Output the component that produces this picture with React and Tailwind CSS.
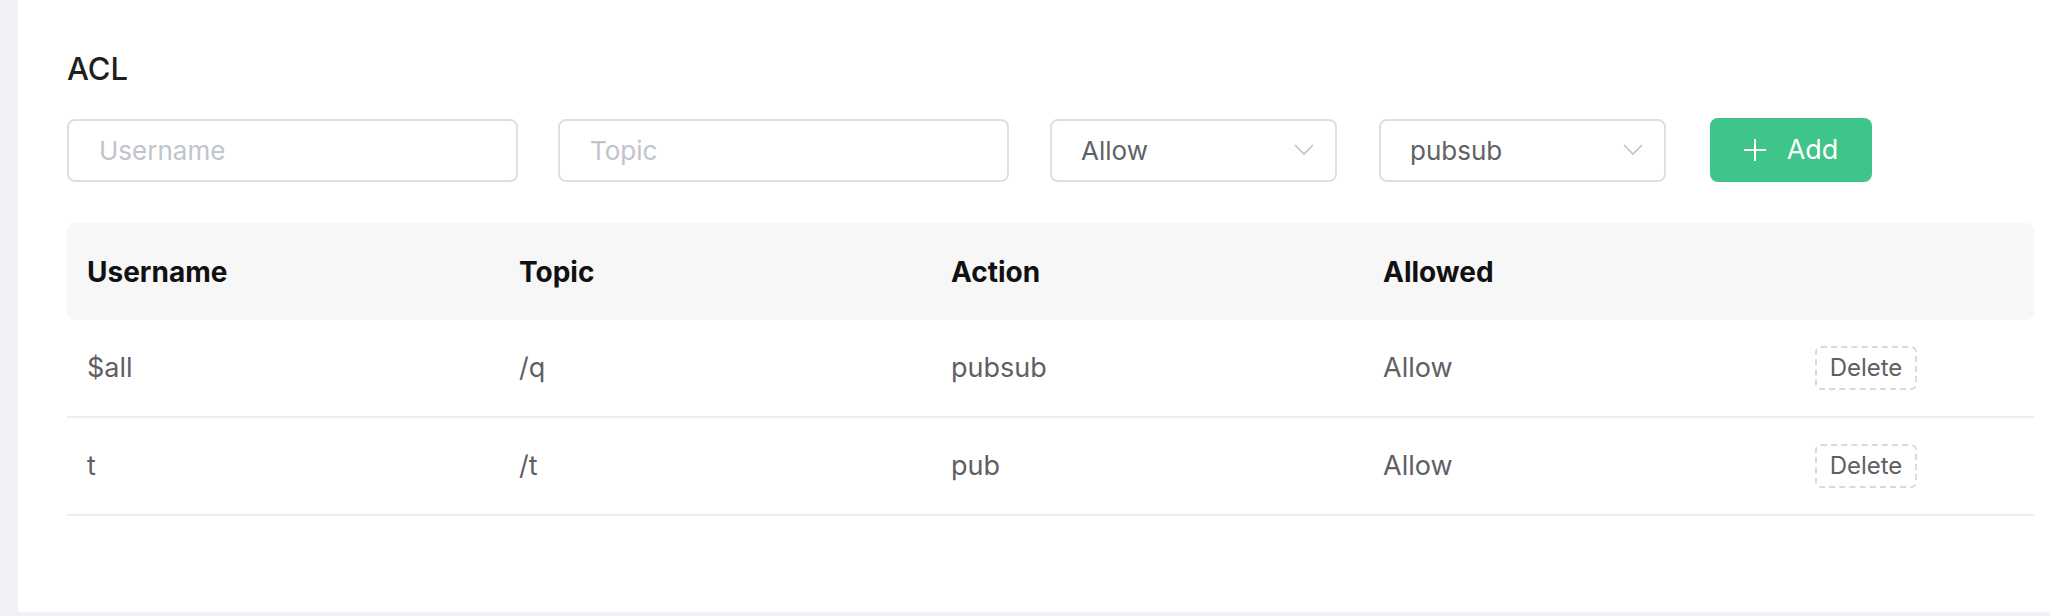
import React from 'react';

const rows = [
  { username: '$all', topic: '/q', action: 'pubsub', allowed: 'Allow' },
  { username: 't', topic: '/t', action: 'pub', allowed: 'Allow' },
];

const Chevron = () => (
  <svg width="20" height="12" viewBox="0 0 20 12" fill="none" className="shrink-0">
    <polyline points="1,1 10,10 19,1" stroke="#c0c4cc" strokeWidth="1.6" />
  </svg>
);

const TextInput = ({ placeholder }) => (
  <div className="w-[451px] h-[63px] border-2 border-[#dcdfe6] rounded-[8px] flex items-center px-[30px]">
    <span className="text-[26px] text-[#c0c4cc]">{placeholder}</span>
  </div>
);

const Select = ({ value, width }) => (
  <div
    className={`${width} h-[63px] border-2 border-[#dcdfe6] rounded-[8px] flex items-center justify-between pl-[29px] pr-[21px]`}
  >
    <span className="text-[26px] text-[#606266]">{value}</span>
    <Chevron />
  </div>
);

const cols = 'grid grid-cols-[432px_432px_432px_432px_1fr]';

const App = () => {
  return (
    <div
      className="w-full h-[616px] bg-[#f0f2f5] pl-[18px] pb-[4px]"
      style={{ fontFamily: 'Inter, "Noto Sans", sans-serif' }}
    >
      <div className="h-full bg-white rounded-bl-[4px] pl-[49px] pr-[16px] pt-[49px]">
        <h2 className="text-[31px] leading-[40px] font-medium text-[#1f1f1f]">ACL</h2>

        <div className="flex items-center mt-[29px]">
          <TextInput placeholder="Username" />
          <div className="ml-[40px]">
            <TextInput placeholder="Topic" />
          </div>
          <div className="ml-[41px]">
            <Select value="Allow" width="w-[287px]" />
          </div>
          <div className="ml-[42px]">
            <Select value="pubsub" width="w-[287px]" />
          </div>
          <button className="ml-[44px] w-[162px] h-[64px] rounded-[8px] bg-[#3fc48a] flex items-center justify-center gap-[21px] text-white">
            <svg width="22" height="22" viewBox="0 0 22 22" fill="none">
              <line x1="11" y1="0" x2="11" y2="22" stroke="white" strokeWidth="2" />
              <line x1="0" y1="11" x2="22" y2="11" stroke="white" strokeWidth="2" />
            </svg>
            <span className="text-[27px]">Add</span>
          </button>
        </div>

        <div className="mt-[41px]">
          <div className={`${cols} h-[97px] items-center bg-[#f7f7f7] rounded-[8px]`}>
            {['Username', 'Topic', 'Action', 'Allowed', ''].map((h, i) => (
              <div key={i} className="px-[20px] text-[28px] font-bold text-[#111111]">
                {h}
              </div>
            ))}
          </div>
          {rows.map((r, i) => (
            <div key={i} className={`${cols} h-[98px] items-center border-b-2 border-[#ebeef5]`}>
              <div className="px-[20px] text-[27px] text-[#5f6066]">{r.username}</div>
              <div className="px-[20px] text-[27px] text-[#5f6066]">{r.topic}</div>
              <div className="px-[20px] text-[27px] text-[#5f6066]">{r.action}</div>
              <div className="px-[20px] text-[27px] text-[#5f6066]">{r.allowed}</div>
              <div className="px-[20px]">
                <button className="w-[102px] h-[44px] border-2 border-dashed border-[#d9d9d9] rounded-[6px] text-[24px] text-[#5f6066] flex items-center justify-center">
                  Delete
                </button>
              </div>
            </div>
          ))}
        </div>
      </div>
    </div>
  );
};

export default App;
